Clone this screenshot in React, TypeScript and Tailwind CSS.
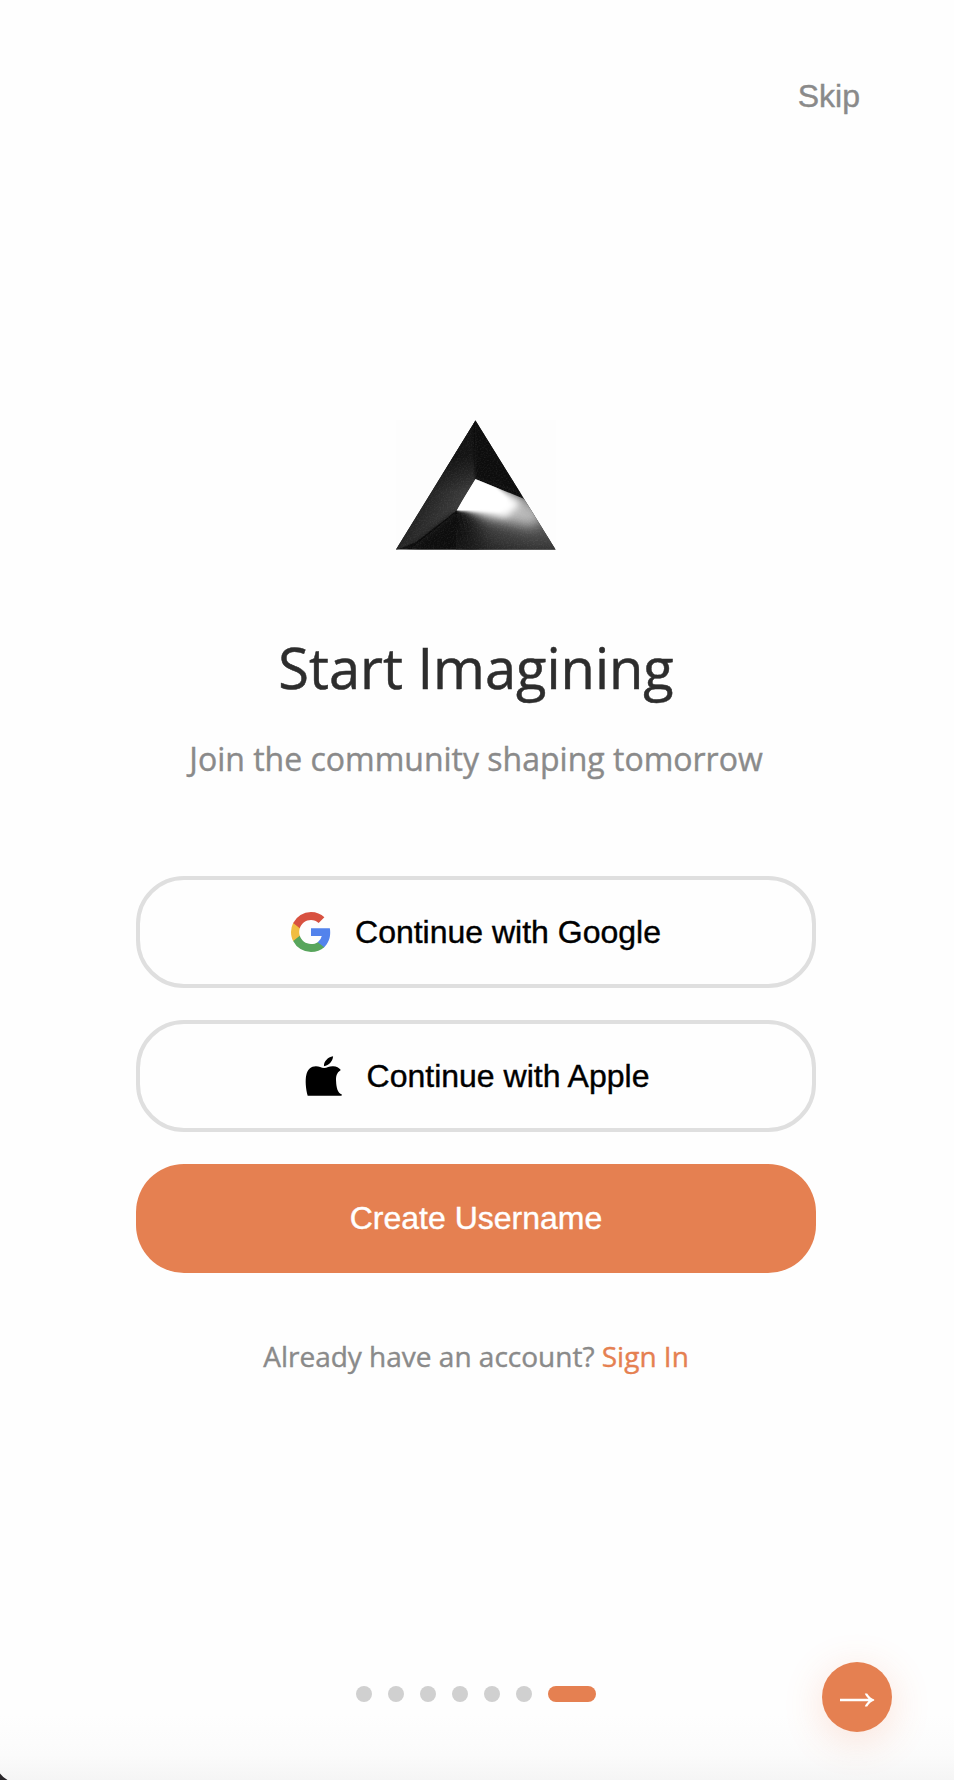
import type { ReactNode } from "react";

function PyramidLogo() {
  return (
    <svg className="block h-[130px] w-40" viewBox="0 0 160 130" aria-hidden="true">
      <defs>
        <clipPath id="tri"><path d="M79.500.5 159.500 129.500H0z" /></clipPath>
        <clipPath id="lit"><path d="M79.500 59 160 92v38H0l60-39z" /></clipPath>
        <linearGradient id="left" x1="25" y1="65" x2="72" y2="92" gradientUnits="userSpaceOnUse">
          <stop offset="0" stopColor="#1b1b1b" /><stop offset="1" stopColor="#444" />
        </linearGradient>
        <linearGradient id="top" x1="72" y1="0" x2="72" y2="72" gradientUnits="userSpaceOnUse">
          <stop offset="0" stopColor="#101010" /><stop offset=".5" stopColor="#101010" stopOpacity=".85" /><stop offset="1" stopColor="#101010" stopOpacity="0" />
        </linearGradient>
        <linearGradient id="floor" x1="58" y1="112" x2="130" y2="96" gradientUnits="userSpaceOnUse">
          <stop offset="0" stopColor="#0e0e0e" /><stop offset=".2" stopColor="#161616" /><stop offset=".5" stopColor="#4a4a4a" /><stop offset="1" stopColor="#686868" />
        </linearGradient>
        <linearGradient id="fade" x1="0" y1="96" x2="0" y2="130" gradientUnits="userSpaceOnUse">
          <stop offset="0" stopColor="#1c1c1c" stopOpacity="0" /><stop offset="1" stopColor="#1c1c1c" stopOpacity=".7" />
        </linearGradient>
        <filter id="b2" x="-50%" y="-50%" width="200%" height="200%"><feGaussianBlur stdDeviation="1.6" /></filter>
        <filter id="b3" x="-50%" y="-50%" width="200%" height="200%"><feGaussianBlur stdDeviation="3.5" /></filter>
        <filter id="b5" x="-50%" y="-50%" width="200%" height="200%"><feGaussianBlur stdDeviation="6" /></filter>
        <filter id="grain" x="0" y="0" width="100%" height="100%">
          <feTurbulence type="fractalNoise" baseFrequency=".7" numOctaves="2" />
          <feColorMatrix values="0 0 0 0 1  0 0 0 0 1  0 0 0 0 1  .9 0 0 0 -.38" />
        </filter>
      </defs>
      <path fill="#fdfdfd" d="M0 0h160v130H0z" />
      <g clipPath="url(#tri)">
        <path fill="#131313" d="M0 0h160v130H0z" />
        <path fill="url(#left)" d="M79.500 0V59L60 91 20 122 0 130V0z" />
        <path fill="url(#top)" d="M0 0h80v72H0z" />
        <path fill="#101010" filter="url(#b2)" d="M79-5v63l85 30V-5z" />
        <path fill="#0e0e0e" filter="url(#b3)" d="M58 94 8 134h70V94z" />
        <g clipPath="url(#lit)">
          <path fill="url(#floor)" d="M62 91 79.500 55 170 98v42H74z" filter="url(#b3)" />
          <path fill="url(#fade)" d="M60 96h100v34H60z" />
          <path fill="#bbb" filter="url(#b5)" d="M70 86 80 64 124 76 148 96 136 106 90 98z" />
          <path fill="#fff" filter="url(#b3)" d="M68 78 82 62 106 70 124 84 110 97 72 90z" />
          <path fill="#fff" filter="url(#b2)" d="M62 90.500 70 53 100 66 112 80 104 92 66 91z" />
          <path fill="#fff" d="M79.500 59.500 90 65 84 90 60.500 90.500z" />
        </g>
        <path filter="url(#grain)" opacity=".18" d="M0 0h160v130H0z" />
      </g>
    </svg>
  );
}

function GoogleIcon() {
  return (
    <svg className="block size-10" viewBox="0 0 18 18" aria-hidden="true">
      <path fill="#5383ec" d="M17.64 9.2c0-.637-.057-1.251-.164-1.84H9v3.481h4.844a4.14 4.14 0 0 1-1.796 2.716v2.259h2.908c1.702-1.567 2.684-3.875 2.684-6.615z" />
      <path fill="#58a55c" d="M9 18c2.43 0 4.467-.806 5.956-2.18l-2.908-2.259c-.806.54-1.837.86-3.048.86-2.344 0-4.328-1.584-5.036-3.711H.957v2.332A8.997 8.997 0 0 0 9 18z" />
      <path fill="#f1bd42" d="M3.964 10.71A5.41 5.41 0 0 1 3.682 9c0-.593.102-1.17.282-1.71V4.958H.957A8.996 8.996 0 0 0 0 9c0 1.452.348 2.827.957 4.042l3.007-2.332z" />
      <path fill="#d85140" d="M9 3.58c1.321 0 2.508.454 3.44 1.345l2.582-2.58C13.463.891 11.426 0 9 0A8.997 8.997 0 0 0 .957 4.958L3.964 7.29C4.672 5.163 6.656 3.58 9 3.58z" />
    </svg>
  );
}

function AppleIcon() {
  return (
    <svg className="block size-10" viewBox="0.5 0 40 40" aria-hidden="true">
      <path d="M21.400 10.200C21.200 5.800 25 1.200 30.600.3c-.3 4.500-4.100 9.500-9.200 9.900z" />
      <path d="M5.200 39.800C3.200 33 2.600 24 3.800 19 5 13.600 8.600 10.300 13.400 10.300c3.300 0 5.300 1.700 8.300 1.700s5-1.900 9-1.700c3.200.2 5.800 1.500 7.600 3.800-4.500 3-5 6.500-4.700 11.400.3 6 1.400 11.500 5.800 13L39 39.800z" />
    </svg>
  );
}

const button = "flex w-full items-center justify-center gap-6 rounded-[48px] font-['Liberation_Sans',Arial,sans-serif] text-[32px] leading-[37px] [-webkit-text-stroke:0.4px]";

function SocialButton({ icon, children }: { icon: ReactNode; children: ReactNode }) {
  return (
    <button className={`${button} h-28 border-4 border-[#dfdfdf] text-black`}>
      {icon}
      <span>{children}</span>
    </button>
  );
}

export default function App() {
  return (
    <main className="relative flex h-[1780px] w-[954px] flex-col overflow-hidden bg-[linear-gradient(to_bottom,#fefefe_0,#fefefe_1715px,#fbfbfb_1755px,#f5f5f5_1780px)] font-['Open_Sans',sans-serif]">
      <header className="flex h-[420px] justify-end pt-[78px] pr-[94px]">
        <button className="h-[37px] font-['Liberation_Sans',Arial,sans-serif] text-[32px] leading-[37px] text-[#8a8a8a] [-webkit-text-stroke:0.4px]">Skip</button>
      </header>
      <section className="ml-[136px] flex w-[680px] flex-col items-center">
        <PyramidLogo />
        <h1 className="mt-[79px] text-[56px] leading-[76px] text-[#2d2d2d] [-webkit-text-stroke:0.5px]">Start Imagining</h1>
        <p className="mt-[32px] text-[32px] leading-[44px] text-[#8a8a8a] [-webkit-text-stroke:0.4px]">Join the community shaping tomorrow</p>
        <div className="mt-[95px] flex w-full flex-col gap-8">
          <SocialButton icon={<GoogleIcon />}>Continue with Google</SocialButton>
          <SocialButton icon={<AppleIcon />}>Continue with Apple</SocialButton>
          <button className={`${button} h-[109px] bg-[#e58051] text-white`}>Create Username</button>
        </div>
        <p className="mt-[64px] text-[28px] leading-[38px] text-[#8a8a8a] [-webkit-text-stroke:0.4px]">
          Already have an account? <a className="text-[#e58051]">Sign In</a>
        </p>
      </section>
      <footer className="mt-auto flex h-[118px] items-start justify-between pr-[62px] pl-[356px]">
        <div className="mt-6 flex gap-4">
          {[0, 1, 2, 3, 4, 5].map((dot) => (
            <span key={dot} className="size-4 rounded-full bg-[#d0d0d0]" />
          ))}
          <span className="h-4 w-12 rounded-full bg-[#e58051]" />
        </div>
        <button className="flex size-[70px] items-center justify-center rounded-full bg-[#e58051] shadow-[0_8px_40px_rgba(240,110,60,0.2)]" aria-label="Next">
          <svg className="mt-[5px] h-4 w-[36px]" viewBox="0 0 36 16" aria-hidden="true">
            <path fill="#fff" d="M1 6.700h28.500C28 5.200 26.500 3.500 25.800 1.500h2.400C30 4.500 32.200 6.500 35.200 7.500v1c-3 1-5.200 3-7 6h-2.400c.7-2 2.200-3.700 3.700-5.200H1z" />
          </svg>
        </button>
      </footer>
      <svg className="absolute bottom-0 left-0 h-2 w-2" viewBox="0 0 8 8" aria-hidden="true">
        <path fill="#29262a" d="M0 1.500Q3 5.500 7.500 8H0z" />
      </svg>
    </main>
  );
}
